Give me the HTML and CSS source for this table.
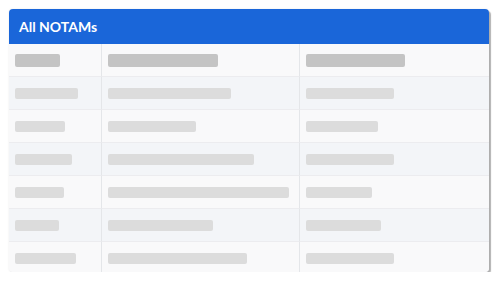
FILE: index.html
```html
<!DOCTYPE html>
<html lang="en">
<head>
    <meta charset="UTF-8">
    <meta name="viewport" content="width=device-width, initial-scale=1.0">
    <title>All NOTAMs</title>
    <link rel="stylesheet" href="styles.css">
</head>
<body>

    <div class="card">
        <!-- Card title -->
        <div class="card-header">All NOTAMs</div>

        <!-- Loading skeleton for the NOTAM table -->
        <table class="notam-table">
            <thead>
                <tr>
                    <th class="col-id"><span class="bar bar-head" style="width: 45px"></span></th>
                    <th class="col-loc"><span class="bar bar-head" style="width: 110px"></span></th>
                    <th><span class="bar bar-head" style="width: 99px"></span></th>
                </tr>
            </thead>
            <tbody>
                <tr>
                    <td><span class="bar" style="width: 63px"></span></td>
                    <td><span class="bar" style="width: 123px"></span></td>
                    <td><span class="bar" style="width: 88px"></span></td>
                </tr>
                <tr>
                    <td><span class="bar" style="width: 50px"></span></td>
                    <td><span class="bar" style="width: 88px"></span></td>
                    <td><span class="bar" style="width: 72px"></span></td>
                </tr>
                <tr>
                    <td><span class="bar" style="width: 57px"></span></td>
                    <td><span class="bar" style="width: 146px"></span></td>
                    <td><span class="bar" style="width: 88px"></span></td>
                </tr>
                <tr>
                    <td><span class="bar" style="width: 49px"></span></td>
                    <td><span class="bar" style="width: 181px"></span></td>
                    <td><span class="bar" style="width: 66px"></span></td>
                </tr>
                <tr>
                    <td><span class="bar" style="width: 44px"></span></td>
                    <td><span class="bar" style="width: 105px"></span></td>
                    <td><span class="bar" style="width: 75px"></span></td>
                </tr>
                <tr>
                    <td><span class="bar" style="width: 61px"></span></td>
                    <td><span class="bar" style="width: 139px"></span></td>
                    <td><span class="bar" style="width: 88px"></span></td>
                </tr>
            </tbody>
        </table>
    </div>

</body>
</html>
```

FILE: styles.css
```css
/* Page */
body {
    font-family: Lato, "Open Sans", sans-serif;
    margin: 0;
    padding: 9px 11px 0 9px;
    background-color: #fff;
}

/* Card with blue title bar */
.card {
    height: 263px;
    overflow: hidden;
    border-radius: 4px;
    background-color: #f9f9fa;
    box-shadow: 2px 2px 1px rgba(0, 0, 0, 0.3), 0 0 2px rgba(0, 0, 0, 0.1);
}

.card-header {
    height: 35px;
    line-height: 36px;
    padding: 0 10px;
    background-color: #1a66d9;
    color: #fff;
    font-size: 14px;
    font-weight: bold;
    box-sizing: border-box;
}

/* Table */
.notam-table {
    width: 100%;
    border-collapse: separate;
    border-spacing: 0;
    table-layout: fixed;
}

.notam-table th,
.notam-table td {
    height: 32px;
    padding: 0 6px;
    text-align: left;
    vertical-align: middle;
    border-bottom: 1px solid #ececef;
    border-left: 1px solid #e4e6e9;
}

.notam-table th:first-child,
.notam-table td:first-child {
    border-left: none;
}

.col-id {
    width: 80px;
}

.col-loc {
    width: 185px;
}

.notam-table thead tr {
    background-color: #f9f9fa;
}

.notam-table tbody tr:nth-child(odd) {
    background-color: #f3f5f8;
}

.notam-table tbody tr:nth-child(even) {
    background-color: #f9f9fa;
}

/* Placeholder bars */
.bar {
    display: block;
    height: 11px;
    border-radius: 2px;
    background-color: #dcdcdc;
}

.bar-head {
    height: 13px;
    background-color: #c4c4c4;
}
```
